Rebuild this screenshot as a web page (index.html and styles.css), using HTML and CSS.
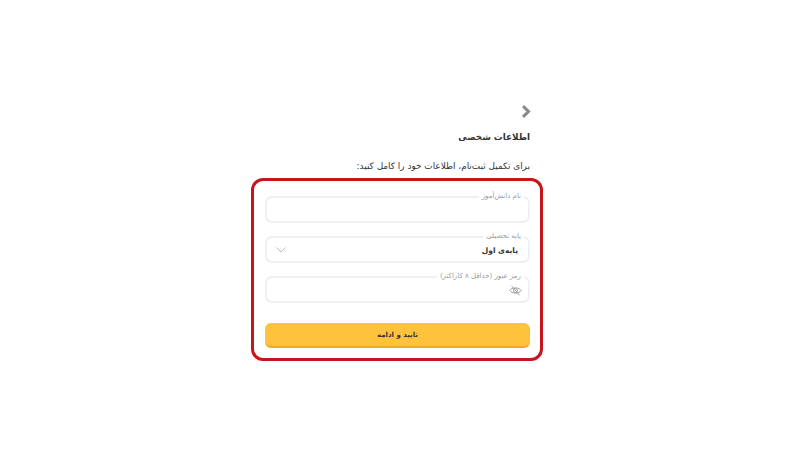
FILE: index.html
```html
<!DOCTYPE html>
<html lang="fa" dir="rtl">
    <head>
        <meta charset="utf-8">
        <title>اطلاعات شخصی</title>
        <link rel="stylesheet" href="styles.css">
    </head>
    <body>
        <div class="page">
            <div class="back">
                <svg width="11" height="13" viewBox="0 0 11 13"><path d="M2 1.2 L7.5 6.5 L2 11.8" fill="none" stroke="#8a8a8a" stroke-width="3"/></svg>
            </div>
            <h1 class="title">اطلاعات شخصی</h1>
            <p class="intro">برای تکمیل ثبت‌نام، اطلاعات خود را کامل کنید:</p>
            <form class="card">
                <fieldset class="field">
                    <legend>نام دانش‌آموز</legend>
                </fieldset>
                <fieldset class="field">
                    <legend>پایه تحصیلی</legend>
                    <div class="field-row">
                        <span class="value">پایه‌ی اول</span>
                        <svg width="10" height="6" viewBox="0 0 10 6"><path d="M0.5 0.5 L5 5 L9.5 0.5" fill="none" stroke="#bdbdbd" stroke-width="1"/></svg>
                    </div>
                </fieldset>
                <fieldset class="field">
                    <legend>رمز عبور (حداقل ۸ کاراکتر)</legend>
                    <div class="field-row">
                        <svg width="13" height="11" viewBox="0 0 13 11"><path d="M0.7 5.5 C3 2 10 2 12.3 5.5 C10 9 3 9 0.7 5.5 Z" fill="none" stroke="#a0a0a0" stroke-width="1"/><circle cx="6.5" cy="5.5" r="2" fill="none" stroke="#a0a0a0" stroke-width="1"/><path d="M2.5 0.8 L10.5 10.2" stroke="#a0a0a0" stroke-width="1"/></svg>
                    </div>
                </fieldset>
                <button class="submit" type="button">تایید و ادامه</button>
            </form>
        </div>
    </body>
</html>
```

FILE: styles.css
```css
body {
    margin: 0;
    height: 450px;
    padding-right: 6px;
    background-color: #fff;
    font-family: "DejaVu Sans", sans-serif;
    color: #333;
    overflow: hidden;
}

.page {
    width: 292px;
    margin: 0 auto;
    padding-top: 105px;
}

.back {
    height: 13px;
    padding-right: 11px;
}

.back svg {
    display: block;
}

.title {
    margin: 11px 13px 0 0;
    font-size: 8.8px;
    line-height: 16px;
    font-weight: 700;
}

.intro {
    margin: 13px 13px 0 0;
    font-size: 8.9px;
    line-height: 16px;
}

.card {
    box-sizing: border-box;
    width: 292px;
    height: 183px;
    margin-top: 4px;
    padding: 11px 10px 0 11px;
    border: 3px solid #c4161c;
    border-radius: 12px;
}

.field {
    box-sizing: border-box;
    height: 31px;
    margin: 0 0 9px 0;
    padding: 0 4px;
    border: 2px solid #f0f0f0;
    border-radius: 7px;
    min-width: 0;
}

.field legend {
    padding: 0 3px;
    font-size: 7px;
    line-height: 9px;
    color: #9a9a9a;
}

.field-row {
    display: flex;
    justify-content: space-between;
    align-items: center;
    height: 18px;
    padding: 0 2px 0 5px;
}

.value {
    padding-right: 4px;
    font-size: 7.5px;
    font-weight: 700;
    color: #333;
}

.submit {
    display: block;
    width: 100%;
    height: 25px;
    margin-top: 20px;
    padding: 0;
    background-color: #ffc23d;
    border: 0;
    border-bottom: 2px solid #f5a81c;
    border-radius: 6px;
    font-family: inherit;
    font-size: 7px;
    font-weight: 700;
    color: #333;
}
```
